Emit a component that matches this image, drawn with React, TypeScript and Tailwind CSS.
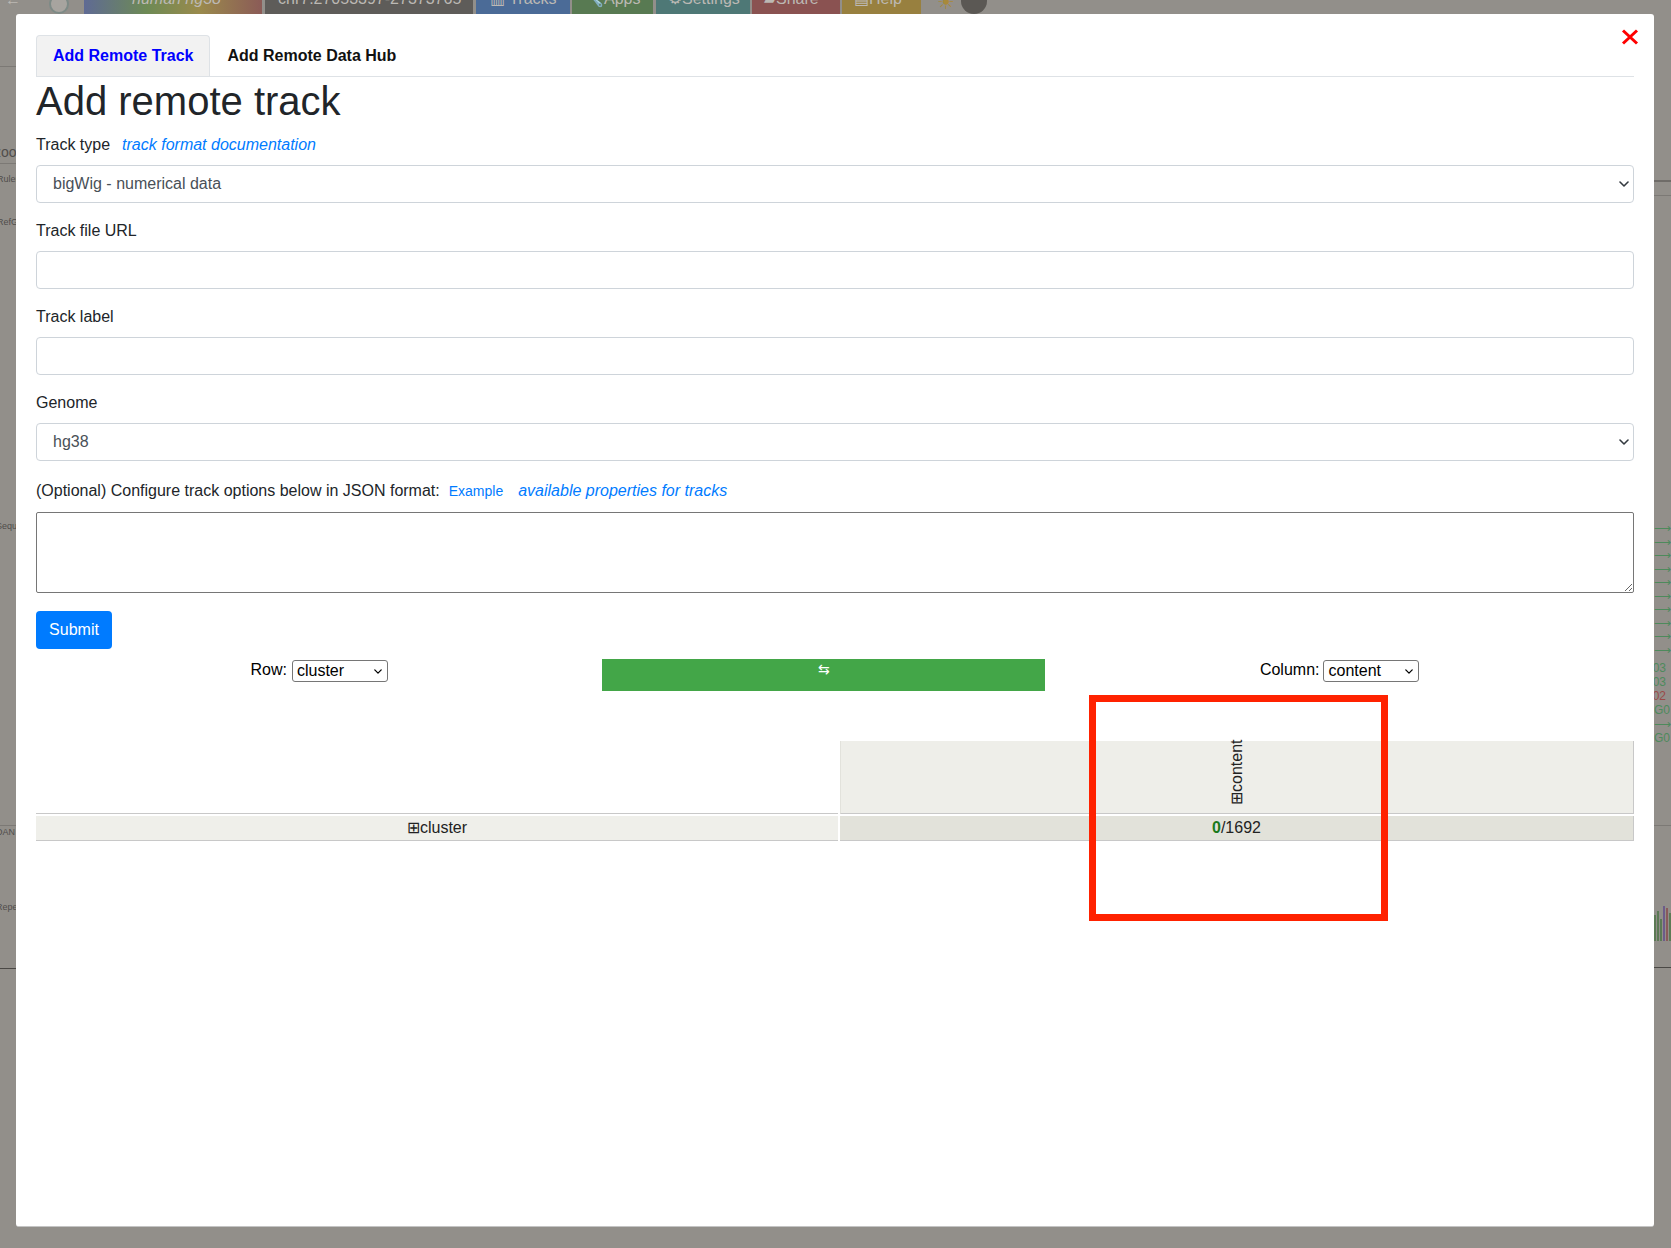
import React from 'react'

const Chevron = ({ className }: { className?: string }) => (
  <svg className={className} width="10" height="6" viewBox="0 0 10 6" fill="none">
    <path d="M1 1l4 4 4-4" stroke="currentColor" strokeWidth="1.6" strokeLinecap="round" strokeLinejoin="round" />
  </svg>
)

// dimmed page behind the dialog
const TopBar = () => {
  return (
    <div className="flex h-[14px] items-start overflow-hidden whitespace-nowrap text-[16px] leading-[16px] text-[#bcb9b4]">
      <div className="flex w-[84px] shrink-0">
        <span className="-mt-[8px] ml-[5px]">←</span>
        <span className="-mt-[6px] ml-[28px] h-[20px] w-[20px] rounded-full border-2 border-[#7d8a86] bg-[#a7a49f]" />
      </div>
      <div className="h-[14px] w-[178px] shrink-0 overflow-hidden bg-[linear-gradient(90deg,#5f6a94,#6d8a55_35%,#9a8a4c_65%,#8b5b57)] pl-[48px] italic">
        <div className="-mt-[9px]">human hg38</div>
      </div>
      <div className="ml-[3px] h-[14px] w-[208px] shrink-0 overflow-hidden bg-[#5e5c59] pl-[13px]">
        <div className="-mt-[9px]">chr7:27053397-27373765</div>
      </div>
      <div className="ml-[3px] h-[14px] w-[94px] shrink-0 overflow-hidden bg-[#4b6b97] pl-[14px]">
        <div className="-mt-[9px]">▥ Tracks</div>
      </div>
      <div className="ml-[2px] h-[14px] w-[81px] shrink-0 overflow-hidden bg-[#587a52] pl-[12px]">
        <div className="-mt-[9px]">🔧Apps</div>
      </div>
      <div className="ml-[3px] h-[14px] w-[94px] shrink-0 overflow-hidden bg-[#4e7876] pl-[12px]">
        <div className="-mt-[9px]">⚙Settings</div>
      </div>
      <div className="ml-[2px] h-[14px] w-[88px] shrink-0 overflow-hidden bg-[#8a5251] pl-[12px]">
        <div className="-mt-[9px]">▰Share</div>
      </div>
      <div className="ml-[2px] h-[14px] w-[79px] shrink-0 overflow-hidden bg-[#98803f] pl-[12px]">
        <div className="-mt-[9px]">▤Help</div>
      </div>
      <span className="-mt-[8px] ml-[16px] text-[20px] leading-[20px] text-[#a8893a]">☀</span>
      <span className="-mt-[12px] ml-[6px] h-[26px] w-[26px] rounded-full bg-[#5b5854]" />
    </div>
  )
}

const LeftStrip = () => (
  <div className="flex w-[16px] flex-col overflow-visible whitespace-nowrap text-[#4f4d4a]">
    <div className="mt-[52px] h-px w-full bg-[#7c7975]" />
    <div className="-ml-[6px] mt-[78px] text-[14px] leading-[14px]">zoo</div>
    <div className="mt-[4px] h-px w-full bg-[#7c7975]" />
    <div className="-ml-[3px] mt-[10px] text-[9px] leading-[10px]">Ruler</div>
    <div className="-ml-[3px] mt-[33px] text-[9px] leading-[10px]">RefGe</div>
    <div className="-ml-[4px] mt-[294px] text-[9px] leading-[10px]">Sequenc</div>
    <div className="mt-[294px] h-px w-full bg-[#7c7975]" />
    <div className="-ml-[4px] mt-[1px] text-[9px] leading-[10px]">DAN</div>
    <div className="-ml-[4px] mt-[65px] text-[9px] leading-[10px]">Repe</div>
    <div className="mt-[56px] h-px w-full bg-[#4a4845]" />
  </div>
)

const RightStrip = () => (
  <div className="flex w-[17px] flex-col whitespace-nowrap text-[12px] leading-[14px]">
    <div className="mt-[166px] h-[2px] w-full bg-[#6f6c68]" />
    <div className="mt-[13px] h-px w-full bg-[#7c7975]" />
    <div className="mt-[326px] flex flex-col text-[#4d8a5c]">
      {Array.from({ length: 10 }).map((_, i) => (
        <div key={i} className="h-[13.5px] leading-[13px]">⟶</div>
      ))}
    </div>
    <div className="-ml-[8px] mt-[4px] text-[#4d8a5c]">003</div>
    <div className="-ml-[8px] text-[#4d8a5c]">003</div>
    <div className="-ml-[8px] text-[#9a4a48]">002</div>
    <div className="text-[#4d8a5c]">G0</div>
    <div className="text-[#4d8a5c]">⟶</div>
    <div className="text-[#4d8a5c]">G0</div>
    <div className="mt-[80px] h-px w-full bg-[#7c7975]" />
    <div className="mt-[80px] flex h-[35px] items-end gap-[1px]">
      <div className="h-[26px] w-[2px] bg-[#5c7a55]" />
      <div className="h-[30px] w-[2px] bg-[#5c7a55]" />
      <div className="h-[22px] w-[2px] bg-[#5c7a55]" />
      <div className="h-[35px] w-[2px] bg-[#6c5c8a]" />
      <div className="h-[33px] w-[2px] bg-[#8a5a5a]" />
      <div className="h-[28px] w-[2px] bg-[#5c7a55]" />
    </div>
    <div className="mt-[26px] h-px w-full bg-[#4a4845]" />
  </div>
)

const FormSelect = ({ value }: { value: string }) => (
  <div className="flex h-[38px] w-full items-center justify-between rounded-[4px] border border-[#ced4da] bg-white pl-4 pr-[4px] text-[16px] text-[#495057]">
    <span>{value}</span>
    <Chevron className="text-[#343a40]" />
  </div>
)

const TextInput = () => (
  <input className="block h-[38px] w-full rounded-[4px] border border-[#ced4da] bg-white px-4 text-[16px] outline-none" />
)

const SmallSelect = ({ value }: { value: string }) => (
  <div className="mt-[1px] flex h-[22px] w-[96px] items-center justify-between rounded-[3px] border border-[#767676] bg-white pl-[4px] pr-[5px] text-[16px] leading-[20px] text-black">
    <span>{value}</span>
    <Chevron className="h-[5px] w-[8px] text-black" />
  </div>
)

export default function App() {
  return (
    <div className="relative h-[1248px] w-full overflow-hidden bg-[#928f8a] font-['Liberation_Sans',Arial,sans-serif]">
      <div className="flex h-full flex-col">
        <TopBar />
        <div className="flex flex-1 justify-between">
          <LeftStrip />
          <RightStrip />
        </div>
      </div>

      {/* dialog */}
      <div className="absolute left-[16px] top-[14px] h-[1213px] w-[1638px] rounded-[3px] border-b border-[#c4c4c4] bg-white pl-[20px] pr-[20px] pt-[21px] text-[#212529]">
        <button className="absolute right-[15px] top-[15px] text-[#ff0000]" aria-label="close">
          <svg width="18" height="16" viewBox="0 0 18 16">
            <path d="M2 1.5l14 13M16 1.5l-14 13" stroke="currentColor" strokeWidth="3" />
          </svg>
        </button>

        {/* tabs */}
        <div className="flex border-b border-[#dee2e6]">
          <div className="rounded-t-[4px] border border-b-0 border-[#dee2e6] bg-[#f2f2f2] px-4 py-2 text-[16px] font-bold leading-6 text-[#0000ff]">
            Add Remote Track
          </div>
          <div className="border border-b-0 border-transparent px-4 py-2 text-[16px] font-bold leading-6 text-[#111]">
            Add Remote Data Hub
          </div>
        </div>

        <h1 className="mb-2 text-[40px] leading-[48px] text-[#212529]">Add remote track</h1>

        <div className="text-[16px] leading-6">
          <div className="mb-2">
            Track type
            <a className="ml-[12px] italic text-[#007bff]">track format documentation</a>
          </div>
          <FormSelect value="bigWig - numerical data" />

          <div className="mb-2 mt-4">Track file URL</div>
          <TextInput />

          <div className="mb-2 mt-4">Track label</div>
          <TextInput />

          <div className="mb-2 mt-4">Genome</div>
          <FormSelect value="hg38" />

          <div className="mb-[9px] mt-[18px] flex items-baseline">
            <span>(Optional) Configure track options below in JSON format:</span>
            <a className="ml-[9px] text-[14px] text-[#007bff]">Example</a>
            <a className="ml-[15px] italic text-[#007bff]">available properties for tracks</a>
          </div>
          <textarea className="block h-[81px] w-full rounded-[2px] border border-[#767676] bg-white p-2 outline-none" />

          <button className="mt-[18px] h-[38px] w-[76px] rounded-[4px] bg-[#007bff] text-[16px] text-white">Submit</button>
        </div>

        {/* pivot controls */}
        <div className="mt-[10px] flex items-start justify-evenly text-[16px] leading-[24px] text-black">
          <div className="flex items-start gap-[5px]">
            <span className="mt-[-1px]">Row:</span>
            <SmallSelect value="cluster" />
          </div>
          <div className="flex h-[32px] w-[443px] justify-center bg-[#43a648] pt-[1px] font-['DejaVu_Sans',sans-serif] text-[14px] leading-[18px] text-white">
            ⇆
          </div>
          <div className="flex items-start gap-[4px]">
            <span className="mt-[-1px]">Column:</span>
            <SmallSelect value="content" />
          </div>
        </div>

        {/* pivot table */}
        <div className="mt-[50px] grid grid-cols-[802px_794px] gap-x-[2px] gap-y-[2px] text-[16px] text-[#222]">
          <div className="h-[73px] border-b border-[#c8c8c8] bg-white" />
          <div className="flex h-[73px] justify-center border-b border-l border-r border-[#c8c8c8] border-l-[#e2e2dc] bg-[#eeeee9]">
            <span className="h-[64px] rotate-180 leading-[20px] [writing-mode:vertical-rl]">⊞content</span>
          </div>
          <div className="flex h-[25px] items-center justify-center border-b border-[#c8c8c8] bg-[#efefea] leading-[24px]">
            ⊞cluster
          </div>
          <div className="flex h-[25px] items-center justify-center border-b border-r border-[#c8c8c8] bg-[#e2e2da] leading-[24px]">
            <span className="font-bold text-[#1b7a1b]">0</span>/1692
          </div>
        </div>

        {/* highlight annotation */}
        <div className="pointer-events-none absolute left-[1073px] top-[681px] h-[226px] w-[299px] border-[7px] border-[#ff2200]" />
      </div>
    </div>
  )
}
